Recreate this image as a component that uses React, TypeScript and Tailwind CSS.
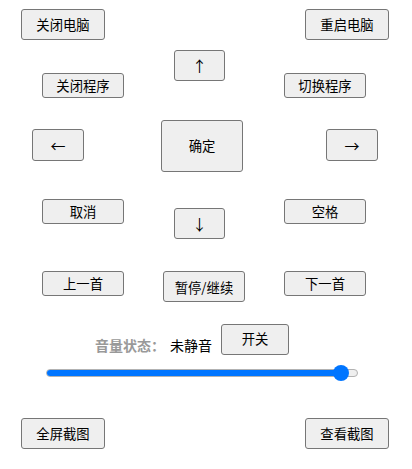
import type { ReactNode } from 'react'

const FONT = "font-['Noto_Sans_CJK_SC','Noto_Sans',sans-serif]"

// Native-looking button, sized explicitly per control
function Btn({ className, children }: { className: string; children: ReactNode }) {
  return (
    <button
      type="button"
      className={`flex shrink-0 items-center justify-center rounded-[3px] border border-[#767676] bg-[#efefef] text-[13.3333px] leading-none text-black ${className}`}
    >
      {children}
    </button>
  )
}

export default function App() {
  const volume = 0.945

  return (
    <div className={`w-[412px] h-[469px] bg-white ${FONT}`}>
      <div className="flex pt-[9px] pl-[21px] pr-[23px] justify-between">
        <Btn className="w-[84px] h-[31px]">关闭电脑</Btn>
        <Btn className="w-[84px] h-[31px]">重启电脑</Btn>
      </div>

      <div className="flex items-start mt-[10px]">
        <Btn className="ml-[42px] mt-[23px] w-[82px] h-[25px]">关闭程序</Btn>
        <Btn className="ml-[50px] w-[51px] h-[31px] text-[15px]">↑</Btn>
        <Btn className="ml-[59px] mt-[23px] w-[82px] h-[25px]">切换程序</Btn>
      </div>

      <div className="flex items-start mt-[22px]">
        <Btn className="ml-[32px] mt-[9px] w-[52px] h-[32px] text-[15px]">←</Btn>
        <Btn className="ml-[77px] w-[82px] h-[52px]">确定</Btn>
        <Btn className="ml-[83px] mt-[9px] w-[52px] h-[32px] text-[15px]">→</Btn>
      </div>

      <div className="flex items-start mt-[27px]">
        <Btn className="ml-[42px] w-[82px] h-[25px]">取消</Btn>
        <Btn className="ml-[50px] mt-[9px] w-[51px] h-[31px] text-[15px]">↓</Btn>
        <Btn className="ml-[59px] w-[82px] h-[25px]">空格</Btn>
      </div>

      <div className="flex items-start mt-[32px]">
        <Btn className="ml-[42px] w-[82px] h-[25px]">上一首</Btn>
        <Btn className="ml-[39px] w-[82px] h-[31px] pt-[3px]">暂停/继续</Btn>
        <Btn className="ml-[39px] w-[82px] h-[25px]">下一首</Btn>
      </div>

      <div className="flex items-end mt-[22px]">
        <div className="ml-[95px] text-[14px] leading-[20px]">
          <span className="font-bold text-[#999999]">音量状态：</span>
          <span className="ml-[5px] text-black">未静音</span>
        </div>
        <Btn className="ml-[9px] w-[68px] h-[31px] pb-[2px]">开关</Btn>
      </div>

      {/* 音量滑块 */}
      <div className="relative ml-[46px] mt-[10px] w-[312px] h-[16px] flex items-center">
        <div className="h-[8px] w-full rounded-full border border-[#b2b2b2] bg-[#efefef] overflow-hidden">
          <div className="h-full bg-[#0075ff]" style={{ width: `${volume * 100}%` }} />
        </div>
        <div
          className="absolute top-0 h-[16px] w-[16px] rounded-full bg-[#0075ff]"
          style={{ left: `calc(${volume * 100}% - 8px)` }}
        />
      </div>

      <div className="flex mt-[37px] pl-[21px] pr-[23px] justify-between">
        <Btn className="w-[84px] h-[31px]">全屏截图</Btn>
        <Btn className="w-[84px] h-[31px]">查看截图</Btn>
      </div>
    </div>
  )
}
